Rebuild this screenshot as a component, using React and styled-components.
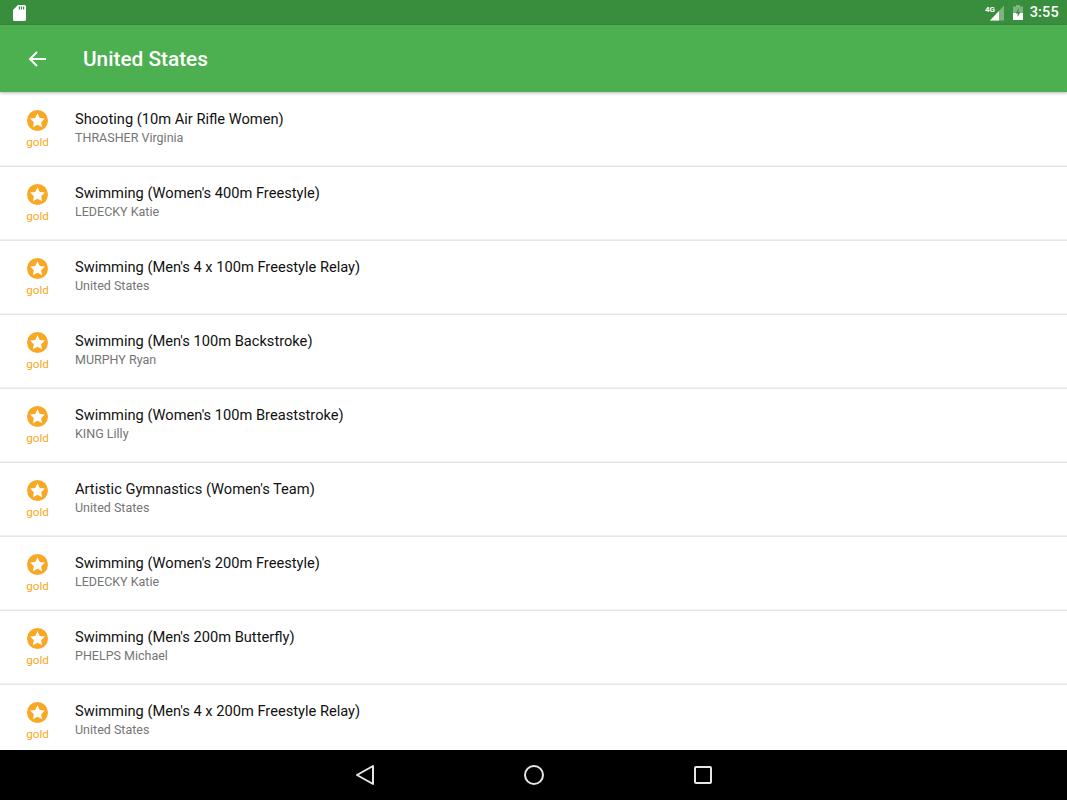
import React from "react";
import styled, { createGlobalStyle } from "styled-components";

const Global = createGlobalStyle`
  html, body { margin: 0; padding: 0; background: #fff; }
  body { font-family: Roboto, "Liberation Sans", sans-serif; }
`;

const Screen = styled.div`
  width: 1067px;
  height: 800px;
  display: flex;
  flex-direction: column;
  overflow: hidden;
  background: #fff;
`;

const StatusBar = styled.div`
  height: 25px;
  flex: none;
  background: #388e3c;
  display: flex;
  align-items: center;
  justify-content: space-between;
  padding: 0 8px 0 13px;
  color: #fff;
`;

const StatusRight = styled.div`
  display: flex;
  align-items: center;
`;

const BatteryIcon = styled.svg`
  width: 10px;
  height: 15px;
  margin-left: 8px;
  flex: none;
`;

const Clock = styled.span`
  font-size: 14.5px;
  font-weight: 500;
  margin-left: 7px;
  letter-spacing: 0.2px;
`;

const AppBar = styled.header`
  position: relative;
  z-index: 1;
  height: 67px;
  flex: none;
  background: #4caf50;
  display: flex;
  align-items: center;
  padding: 0 0 0 27px;
  box-shadow: 0 1px 3px rgba(0, 0, 0, 0.3);
`;

const BackIcon = styled.svg`
  width: 20px;
  height: 20px;
  flex: none;
`;

const Title = styled.h1`
  margin: 2px 0 0 36px;
  font-size: 20.8px;
  font-weight: 500;
  color: #fff;
  line-height: 1;
`;

const List = styled.div`
  flex: 1;
  min-height: 0;
  overflow: hidden;
  padding-top: 1px;
`;

const Row = styled.div`
  height: 73px;
  box-sizing: content-box;
  border-bottom: 1px solid #e6e6e6;
  box-shadow: inset 0 -1px 0 #f0f0f0;
  display: flex;
  align-items: flex-start;
`;

const Medal = styled.div`
  width: 75px;
  flex: none;
  display: flex;
  flex-direction: column;
  align-items: center;
  padding-top: 17px;
`;

const MedalIcon = styled.svg`
  width: 21px;
  height: 21px;
  display: block;
`;

const MedalLabel = styled.span`
  font-size: 11.7px;
  line-height: 14px;
  margin-top: 4px;
  color: #f9a825;
`;

const Texts = styled.div`
  padding-top: 16px;
  display: flex;
  flex-direction: column;
`;

const Event = styled.div`
  font-size: 14.65px;
  line-height: 20px;
  color: #111;
`;

const Athlete = styled.div`
  font-size: 12.5px;
  line-height: 15px;
  margin-top: 1px;
  color: #757575;
`;

const NavBar = styled.nav`
  height: 50px;
  flex: none;
  background: #000;
  display: grid;
  grid-template-columns: 169px 169px 169px;
  justify-content: center;
  align-items: center;
  justify-items: center;
`;

const rows = [
  ["Shooting (10m Air Rifle Women)", "THRASHER Virginia"],
  ["Swimming (Women's 400m Freestyle)", "LEDECKY Katie"],
  ["Swimming (Men's 4 x 100m Freestyle Relay)", "United States"],
  ["Swimming (Men's 100m Backstroke)", "MURPHY Ryan"],
  ["Swimming (Women's 100m Breaststroke)", "KING Lilly"],
  ["Artistic Gymnastics (Women's Team)", "United States"],
  ["Swimming (Women's 200m Freestyle)", "LEDECKY Katie"],
  ["Swimming (Men's 200m Butterfly)", "PHELPS Michael"],
  ["Swimming (Men's 4 x 200m Freestyle Relay)", "United States"],
];

const StarMedal = () => (
  <MedalIcon viewBox="0 0 22 22">
    <circle cx="11" cy="11" r="11" fill="#f9a825" />
    <path
      d="M11 3.3l2.35 5 5.45.68-4 3.75 1.05 5.4L11 15.45l-4.85 2.68 1.05-5.4-4-3.75 5.45-.68z"
      fill="#fff"
    />
  </MedalIcon>
);

export default function App() {
  return (
    <Screen>
      <Global />
      <StatusBar>
        <svg width="13" height="16" viewBox="0 0 13 16">
          <path
            d="M5 0h6.5A1.5 1.5 0 0 1 13 1.5v13a1.5 1.5 0 0 1-1.5 1.5h-10A1.5 1.5 0 0 1 0 14.5V5z"
            fill="#fff"
          />
          <path d="M5.8 1.5h1.2v3H5.8zM7.9 1.5h1.2v3H7.9zM10 1.5h1.2v3H10z" fill="#388e3c" />
        </svg>
        <StatusRight>
          <svg width="20" height="18" viewBox="0 0 20 18">
            <path d="M19 1.5v15H5z" fill="#fff" fillOpacity="0.35" />
            <path d="M14 6.9v9.6H5z" fill="#fff" />
            <text x="0" y="7.5" fontSize="8" fontWeight="700" fill="#fff" fontFamily="Roboto, sans-serif">4G</text>
          </svg>
          <BatteryIcon viewBox="0 0 10 15">
            <path d="M3 0h4v1.5h3V15H0V1.5h3z" fill="#fff" fillOpacity="0.35" />
            <path d="M0 8h10v7H0z" fill="#fff" />
            <path d="M5.8 3L2.8 8.4h1.8v3.6L7.4 7H5.4z" fill="#388e3c" />
          </BatteryIcon>
          <Clock>3:55</Clock>
        </StatusRight>
      </StatusBar>
      <AppBar>
        <BackIcon viewBox="0 0 20 20">
          <path d="M19 10H3M10 3l-7 7 7 7" fill="none" stroke="#fff" strokeWidth="2" />
        </BackIcon>
        <Title>United States</Title>
      </AppBar>
      <List>
        {rows.map(([event, athlete], i) => (
          <Row key={i}>
            <Medal>
              <StarMedal />
              <MedalLabel>gold</MedalLabel>
            </Medal>
            <Texts>
              <Event>{event}</Event>
              <Athlete>{athlete}</Athlete>
            </Texts>
          </Row>
        ))}
      </List>
      <NavBar>
        <svg width="20" height="22" viewBox="0 0 20 22">
          <path d="M18 2v18L2 11z" fill="none" stroke="#e6e6e6" strokeWidth="2" strokeLinejoin="round" />
        </svg>
        <svg width="22" height="22" viewBox="0 0 22 22">
          <circle cx="11" cy="11" r="9" fill="none" stroke="#e6e6e6" strokeWidth="2" />
        </svg>
        <svg width="20" height="20" viewBox="0 0 20 20">
          <rect x="2" y="2" width="16" height="16" rx="1" fill="none" stroke="#e6e6e6" strokeWidth="2" />
        </svg>
      </NavBar>
    </Screen>
  );
}
